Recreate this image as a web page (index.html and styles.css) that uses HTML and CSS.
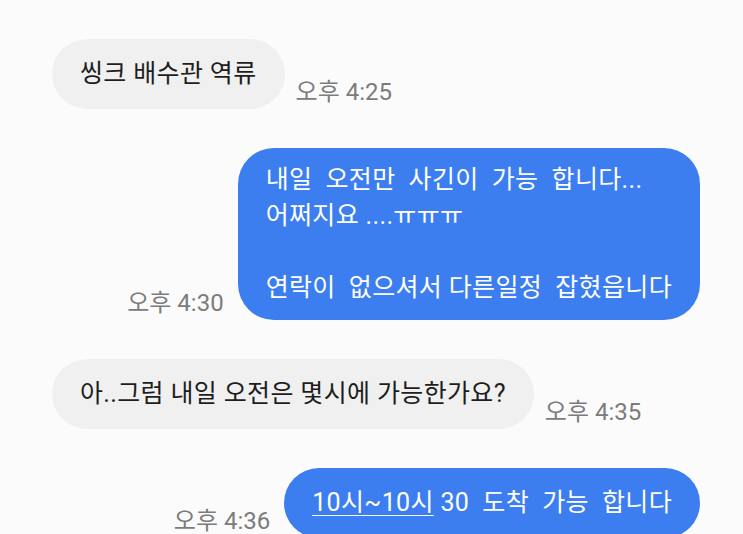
FILE: index.html
```html
<!DOCTYPE html>
<html lang="ko">
<head>
    <meta charset="UTF-8">
    <meta name="viewport" content="width=device-width, initial-scale=1.0">
    <title>메시지</title>
    <link rel="stylesheet" href="styles.css">
</head>
<body>
    <div class="chat">
        <div class="row in">
            <div class="bubble">씽크 배수관 역류</div>
            <span class="time">오후 4:25</span>
        </div>

        <div class="row out">
            <span class="time">오후 4:30</span>
            <div class="bubble multi">내일  오전만  사긴이  가능  합니다...
어쩌지요 ....ㅠㅠㅠ

연락이  없으셔서 다른일정  잡혔읍니다</div>
        </div>

        <div class="row in">
            <div class="bubble">아..그럼 내일 오전은 몇시에 가능한가요?</div>
            <span class="time">오후 4:35</span>
        </div>

        <div class="row out">
            <span class="time">오후 4:36</span>
            <div class="bubble"><u>10시~10시</u> 30  도착  가능  합니다</div>
        </div>
    </div>
</body>
</html>
```

FILE: styles.css
```css
html, body {
    height: 100%;
}
body {
    margin: 0;
    font-family: Roboto, "Noto Sans CJK KR", sans-serif;
    background-color: #fbfbfb;
    overflow: hidden;
}
.chat {
    padding: 39px 43px 0 52px;
    display: flex;
    flex-direction: column;
    gap: 39px;
}
.row {
    display: flex;
    align-items: flex-end;
    gap: 11px;
}
.row.out {
    justify-content: flex-end;
    gap: 14px;
}
.bubble {
    min-height: 70px;
    box-sizing: border-box;
    display: flex;
    align-items: center;
    padding: 14px 28px;
    border-radius: 35px;
    font-size: 25px;
    line-height: 36px;
    letter-spacing: 0.35px;
    white-space: pre-wrap;
}
.in .bubble {
    background-color: #f0f0f0;
    color: #1e1e1e;
}
.out .bubble {
    background-color: #3c7ef0;
    color: #ffffff;
}
.bubble.multi {
    border-radius: 36px;
}
.bubble u {
    text-underline-offset: 4px;
    text-decoration-thickness: 1px;
}
.time {
    font-size: 24px;
    line-height: 28px;
    color: #7c7c7c;
    margin-bottom: 3px;
}
```
